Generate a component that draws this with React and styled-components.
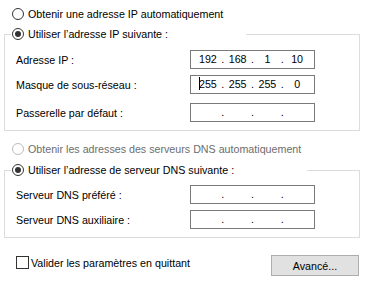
import React from "react";
import styled, { createGlobalStyle } from "styled-components";

const GlobalStyle = createGlobalStyle`
  html, body {
    margin: 0;
    background: #ffffff;
  }
  body {
    font-family: "Liberation Sans", Arial, sans-serif;
    font-size: 10.7px;
    color: #000000;
  }
`;

const Page = styled.div`
  width: 370px;
  height: 287px;
  box-sizing: border-box;
  padding: 4px 10px 0 4px;
`;

const RadioRow = styled.div`
  display: flex;
  align-items: center;
  height: 20px;
  padding-left: ${(p) => p.$indent || 0}px;
  color: ${(p) => (p.$disabled ? "#6d6d6d" : "#000000")};
  margin-top: ${(p) => p.$top || 0}px;
`;

const Radio = styled.span`
  box-sizing: border-box;
  width: 12px;
  height: 12px;
  margin-right: 4px;
  border-radius: 50%;
  border: 1px solid ${(p) => (p.$disabled ? "#bcbcbc" : "#333333")};
  display: flex;
  align-items: center;
  justify-content: center;
  &::after {
    content: "";
    width: 6px;
    height: 6px;
    border-radius: 50%;
    background: #333333;
    display: ${(p) => (p.$checked ? "block" : "none")};
  }
`;

const Group = styled.fieldset`
  margin: ${(p) => p.$top || 0}px 0 0 0;
  padding: 0 0 ${(p) => p.$bottom}px 6px;
  border: 1px solid #dcdcdc;
  min-width: 0;
`;

const Legend = styled.legend`
  padding: 0;
  width: ${(p) => p.$width}px;
`;

const LegendRadio = styled(RadioRow)`
  padding-left: 1px;
`;

const Fields = styled.div`
  display: grid;
  grid-template-columns: 174px 125px;
  padding: ${(p) => p.$top}px 0 0 5px;
  row-gap: 6px;
`;

const Label = styled.div`
  display: flex;
  align-items: center;
  height: 19px;
  margin-top: ${(p) => p.$top || 0}px;
`;

const IpBox = styled.div`
  box-sizing: border-box;
  height: 19px;
  border: 1px solid #7a7a7a;
  background: #ffffff;
  display: grid;
  grid-template-columns: 1fr 4px 1fr 4px 1fr 4px 1fr;
  align-items: center;
  padding: 0 4px;
  margin-top: ${(p) => p.$top || 0}px;
`;

const Segment = styled.span`
  text-align: center;
  line-height: 17px;
  white-space: nowrap;
`;

const Dot = styled.span`
  text-align: center;
  line-height: 17px;
`;

const Caret = styled.span`
  display: inline-block;
  width: 1px;
  height: 13px;
  margin-right: -1px;
  background: #000000;
  vertical-align: -2px;
`;

const Bottom = styled.div`
  display: flex;
  justify-content: space-between;
  align-items: flex-start;
  margin-top: 17px;
  padding: 0 1px 0 12px;
`;

const CheckLabel = styled.label`
  display: flex;
  align-items: center;
  height: 15px;
`;

const Box = styled.span`
  box-sizing: border-box;
  width: 13px;
  height: 13px;
  border: 1px solid #333333;
  background: #ffffff;
  margin-right: 2px;
`;

const Button = styled.button`
  box-sizing: border-box;
  width: 88px;
  height: 21px;
  padding: 0;
  border: 1px solid #adadad;
  background: #e1e1e1;
  font-family: inherit;
  font-size: 10.7px;
  color: #000000;
`;

function IpField({ value, caret, top }) {
  const parts = value ? value.split(".") : ["", "", "", ""];
  return (
    <IpBox $top={top}>
      {parts.map((p, i) => (
        <React.Fragment key={i}>
          {i > 0 && <Dot>.</Dot>}
          <Segment>
            {caret && i === 0 && <Caret />}
            {p}
          </Segment>
        </React.Fragment>
      ))}
    </IpBox>
  );
}

export default function App() {
  return (
    <Page>
      <GlobalStyle />
      <RadioRow $indent={8}>
        <Radio />
        Obtenir une adresse IP automatiquement
      </RadioRow>

      <Group $bottom={8}>
        <Legend $width={235}>
          <LegendRadio>
            <Radio $checked />
            Utiliser l’adresse IP suivante :
          </LegendRadio>
        </Legend>
        <Fields $top={6}>
          <Label>Adresse IP :</Label>
          <IpField value="192.168.1.10" />
          <Label>Masque de sous-réseau :</Label>
          <IpField value="255.255.255.0" caret />
          <Label $top={3}>Passerelle par défaut :</Label>
          <IpField top={3} />
        </Fields>
      </Group>

      <RadioRow $indent={8} $top={8} $disabled>
        <Radio $disabled />
        Obtenir les adresses des serveurs DNS automatiquement
      </RadioRow>

      <Group $bottom={8} $top={1}>
        <Legend $width={296}>
          <LegendRadio>
            <Radio $checked />
            Utiliser l’adresse de serveur DNS suivante :
          </LegendRadio>
        </Legend>
        <Fields $top={5}>
          <Label>Serveur DNS préféré :</Label>
          <IpField />
          <Label>Serveur DNS auxiliaire :</Label>
          <IpField />
        </Fields>
      </Group>

      <Bottom>
        <CheckLabel>
          <Box />
          Valider les paramètres en quittant
        </CheckLabel>
        <Button>Avancé...</Button>
      </Bottom>
    </Page>
  );
}
